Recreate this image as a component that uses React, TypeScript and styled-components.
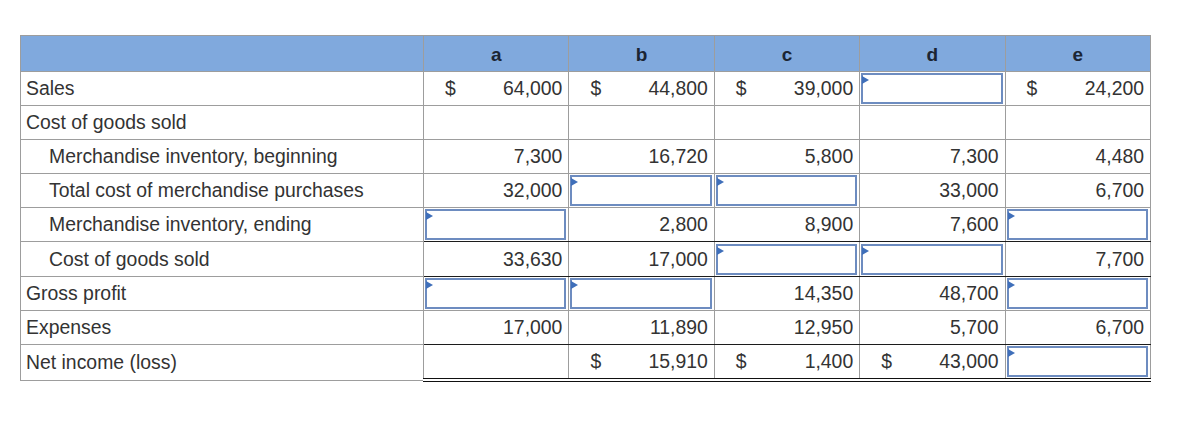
import React from 'react';
import styled, { createGlobalStyle } from 'styled-components';

const GlobalStyle = createGlobalStyle`
    body {
        margin: 0;
        background: #ffffff;
        font-family: "Liberation Sans", Arial, Helvetica, sans-serif;
    }
`;

const Page = styled.div`
    padding: 35px 0 0 20px;
`;

const Sheet = styled.table`
    width: 1131px;
    table-layout: fixed;
    border-collapse: collapse;
    border: 1px solid #9d9d9d;
    color: #333333;
    font-size: 19.4px;
`;

const HeadCell = styled.th`
    height: 35.5px;
    padding: 3px 0 0;
    box-sizing: border-box;
    background-color: #80a9dd;
    border: 1px solid #9d9d9d;
    color: #1b2533;
    font-size: 19px;
    font-weight: bold;
    text-align: center;
    vertical-align: middle;
`;

const LabelCell = styled.td<{ $indent?: boolean }>`
    height: 33.2px;
    padding: 0 0 0 ${props => props.$indent ? '28px' : '5px'};
    border: 1px solid #9d9d9d;
    white-space: nowrap;
    vertical-align: middle;
`;

const ValueCell = styled.td<{ $rule?: 'single' | 'double'; $input?: boolean }>`
    height: 33.2px;
    padding: ${props => props.$input ? '0 2px 0 1px' : '0 6px 0 0'};
    border: 1px solid #9d9d9d;
    border-bottom: ${props =>
        props.$rule === 'double' ? '4px double #111111' :
        props.$rule === 'single' ? '1px solid #1c1c1c' : '1px solid #9d9d9d'};
    text-align: right;
    vertical-align: middle;
    white-space: nowrap;
`;

const Dollar = styled.span`
    float: left;
    margin-left: 21px;
`;

const InputBox = styled.div`
    position: relative;
    box-sizing: border-box;
    height: 31px;
    border: 2px solid #6d8cc0;
    background: #ffffff;

    &::before {
        content: '';
        position: absolute;
        left: -1px;
        top: 1px;
        border-top: 4px solid transparent;
        border-bottom: 4px solid transparent;
        border-left: 7px solid #3f6fba;
    }
`;

type Cell = { v?: string; d?: boolean; input?: boolean };

interface Row {
    label: string;
    indent?: boolean;
    rule?: 'single' | 'double';
    cells: Cell[];
}

const I: Cell = { input: true };
const E: Cell = {};

const rows: Row[] = [
    { label: 'Sales', cells: [{ v: '64,000', d: true }, { v: '44,800', d: true }, { v: '39,000', d: true }, I, { v: '24,200', d: true }] },
    { label: 'Cost of goods sold', cells: [E, E, E, E, E] },
    { label: 'Merchandise inventory, beginning', indent: true, cells: [{ v: '7,300' }, { v: '16,720' }, { v: '5,800' }, { v: '7,300' }, { v: '4,480' }] },
    { label: 'Total cost of merchandise purchases', indent: true, cells: [{ v: '32,000' }, I, I, { v: '33,000' }, { v: '6,700' }] },
    { label: 'Merchandise inventory, ending', indent: true, rule: 'single', cells: [I, { v: '2,800' }, { v: '8,900' }, { v: '7,600' }, I] },
    { label: 'Cost of goods sold', indent: true, rule: 'single', cells: [{ v: '33,630' }, { v: '17,000' }, I, I, { v: '7,700' }] },
    { label: 'Gross profit', cells: [I, I, { v: '14,350' }, { v: '48,700' }, I] },
    { label: 'Expenses', rule: 'single', cells: [{ v: '17,000' }, { v: '11,890' }, { v: '12,950' }, { v: '5,700' }, { v: '6,700' }] },
    { label: 'Net income (loss)', rule: 'double', cells: [E, { v: '15,910', d: true }, { v: '1,400', d: true }, { v: '43,000', d: true }, I] },
];

const columns = ['a', 'b', 'c', 'd', 'e'];

const App = () => (
    <Page>
        <GlobalStyle/>
        <Sheet>
            <colgroup>
                <col style={{ width: 403 }}/>
                {columns.map(c => <col key={c}/>)}
            </colgroup>
            <thead>
                <tr>
                    <HeadCell/>
                    {columns.map(c => <HeadCell key={c}>{c}</HeadCell>)}
                </tr>
            </thead>
            <tbody>
                {rows.map((row, r) => (
                    <tr key={r}>
                        <LabelCell $indent={row.indent}>{row.label}</LabelCell>
                        {row.cells.map((cell, i) => (
                            <ValueCell key={i} $rule={row.rule} $input={cell.input}>
                                {cell.input ? <InputBox/> : (
                                    <>
                                        {cell.d && <Dollar>$</Dollar>}
                                        {cell.v}
                                    </>
                                )}
                            </ValueCell>
                        ))}
                    </tr>
                ))}
            </tbody>
        </Sheet>
    </Page>
);

export default App;
